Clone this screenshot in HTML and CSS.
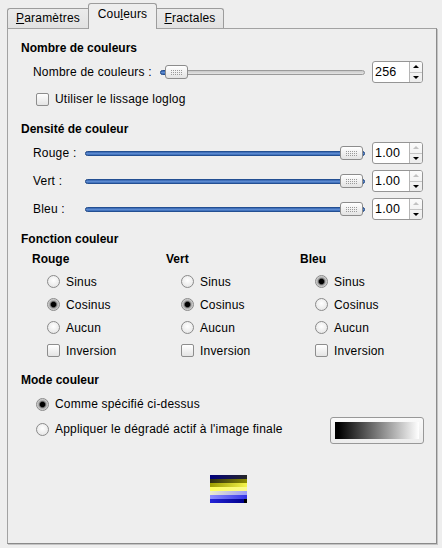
FILE: index.html
```html
<!DOCTYPE html>
<html lang="fr">
<head>
<meta charset="utf-8">
<title>Couleurs</title>
<link rel="stylesheet" href="styles.css">
</head>
<body>
<div class="tabs">
  <div class="tab first"><u>P</u>aramètres</div>
  <div class="tab active">Cou<u>l</u>eurs</div>
  <div class="tab last"><u>F</u>ractales</div>
</div>
<div class="panel">
  <div class="heading">Nombre de couleurs</div>
  <div class="srow">
    <div class="slabel lw-wide">Nombre de couleurs :</div>
    <div class="slider sw-wide">
      <div class="track"><div class="fill" style="width:8px"></div></div>
      <div class="handle" style="left:5px"><span class="dots"></span></div>
    </div>
    <div class="spin"><span class="spin-val">256</span><span class="spin-btns"><span class="sb"><i class="arr-up"></i></span><span class="sb down"><i class="arr-down"></i></span></span></div>
  </div>
  <div class="checkrow">
    <span class="check"></span><span>Utiliser le lissage loglog</span>
  </div>

  <div class="heading h2">Densité de couleur</div>
  <div class="srow">
    <div class="slabel lw-narrow">Rouge :</div>
    <div class="slider sw-narrow">
      <div class="track"><div class="fill" style="width:280px"></div></div>
      <div class="handle" style="left:255px"><span class="dots"></span></div>
    </div>
    <div class="spin"><span class="spin-val">1.00</span><span class="spin-btns"><span class="sb"><i class="arr-up off"></i></span><span class="sb down"><i class="arr-down"></i></span></span></div>
  </div>
  <div class="srow">
    <div class="slabel lw-narrow">Vert :</div>
    <div class="slider sw-narrow">
      <div class="track"><div class="fill" style="width:280px"></div></div>
      <div class="handle" style="left:255px"><span class="dots"></span></div>
    </div>
    <div class="spin"><span class="spin-val">1.00</span><span class="spin-btns"><span class="sb"><i class="arr-up off"></i></span><span class="sb down"><i class="arr-down"></i></span></span></div>
  </div>
  <div class="srow">
    <div class="slabel lw-narrow">Bleu :</div>
    <div class="slider sw-narrow">
      <div class="track"><div class="fill" style="width:280px"></div></div>
      <div class="handle" style="left:255px"><span class="dots"></span></div>
    </div>
    <div class="spin"><span class="spin-val">1.00</span><span class="spin-btns"><span class="sb"><i class="arr-up off"></i></span><span class="sb down"><i class="arr-down"></i></span></span></div>
  </div>

  <div class="heading h3">Fonction couleur</div>
  <div class="fgrid">
    <div class="fcol">
      <div class="colhead">Rouge</div>
      <div class="opts">
        <div class="opt"><span class="radio"></span><span>Sinus</span></div>
        <div class="opt"><span class="radio on"></span><span>Cosinus</span></div>
        <div class="opt"><span class="radio"></span><span>Aucun</span></div>
        <div class="opt"><span class="check"></span><span>Inversion</span></div>
      </div>
    </div>
    <div class="fcol">
      <div class="colhead">Vert</div>
      <div class="opts">
        <div class="opt"><span class="radio"></span><span>Sinus</span></div>
        <div class="opt"><span class="radio on"></span><span>Cosinus</span></div>
        <div class="opt"><span class="radio"></span><span>Aucun</span></div>
        <div class="opt"><span class="check"></span><span>Inversion</span></div>
      </div>
    </div>
    <div class="fcol">
      <div class="colhead">Bleu</div>
      <div class="opts">
        <div class="opt"><span class="radio on"></span><span>Sinus</span></div>
        <div class="opt"><span class="radio"></span><span>Cosinus</span></div>
        <div class="opt"><span class="radio"></span><span>Aucun</span></div>
        <div class="opt"><span class="check"></span><span>Inversion</span></div>
      </div>
    </div>
  </div>

  <div class="heading h4">Mode couleur</div>
  <div class="moderow m1">
    <span class="radio on"></span><span>Comme spécifié ci-dessus</span>
  </div>
  <div class="moderow m2">
    <span class="mode-left"><span class="radio"></span><span class="mlabel">Appliquer le dégradé actif à l'image finale</span></span>
    <span class="gradbtn"><span class="grad"></span></span>
  </div>

  <div class="preview">
    <div class="st s1"></div>
    <div class="st s2"></div>
    <div class="st s3"></div>
    <div class="st s4"></div>
    <div class="st s5"></div>
    <div class="st s6"></div>
    <div class="st s7"></div>
  </div>
</div>
</body>
</html>
```

FILE: styles.css
```css
html, body {
  margin: 0;
  padding: 0;
}
body {
  width: 442px;
  height: 548px;
  overflow: hidden;
  background: #eeeeee;
  font-family: "Liberation Sans", Arial, sans-serif;
  font-size: 12px;
  letter-spacing: 0.2px;
  color: #000;
}

/* Tabs */
.tabs {
  display: flex;
  align-items: flex-end;
  height: 28px;
  padding-left: 7px;
}
.tab {
  box-sizing: border-box;
  height: 20px;
  line-height: 18px;
  text-align: center;
  border: 1px solid #9c9c9c;
  border-bottom: none;
  border-radius: 3px 3px 0 0;
  background: linear-gradient(#ebebeb, #e2e2e2);
}
.tab u {
  text-decoration-thickness: 1px;
  text-underline-offset: 1px;
}
.tab.first {
  width: 81px;
  border-right: none;
  border-radius: 3px 0 0 0;
}
.tab.active {
  width: 69px;
  height: 26px;
  margin-bottom: -1px;
  padding-top: 1px;
  background: #eeeeee;
  position: relative;
  z-index: 2;
}
.tab.last {
  width: 67px;
  border-left: none;
  border-radius: 0 3px 0 0;
}

/* Panel */
.panel {
  box-sizing: border-box;
  margin-left: 7px;
  width: 430px;
  height: 516px;
  border: 1px solid #a2a2a2;
  border-right-color: #8a8a8a;
  border-bottom-color: #8a8a8a;
  box-shadow: 1px 1px 0 #c4c4c4;
  padding: 11px 12px 0 13px;
}
.heading {
  font-weight: bold;
  letter-spacing: 0;
  height: 16px;
  line-height: 16px;
}
.h2 { margin-top: 14px; }
.h3 { margin-top: 10px; }
.h4 { margin-top: 10px; }

/* Slider rows */
.srow {
  display: flex;
  align-items: center;
  height: 24px;
  margin-top: 4px;
  padding-left: 12px;
}
.slabel {
  line-height: 16px;
  white-space: nowrap;
}
.lw-wide { width: 127px; }
.lw-narrow { width: 52px; }
.slider {
  position: relative;
  height: 24px;
  display: flex;
  align-items: center;
}
.sw-wide { width: 205px; }
.sw-narrow { width: 280px; }
.track {
  position: relative;
  flex: 1;
  box-sizing: border-box;
  height: 5px;
  border: 1px solid #9a9a9a;
  border-radius: 3px;
  background: linear-gradient(#c8c8c8, #e4e4e4);
}
.fill {
  position: absolute;
  left: -1px;
  top: -1px;
  bottom: -1px;
  box-sizing: border-box;
  border: 1px solid #234f92;
  border-radius: 3px;
  background: linear-gradient(#3464b0, #5c8ad0 50%, #3869b5);
}
.handle {
  position: absolute;
  top: 5px;
  box-sizing: border-box;
  width: 23px;
  height: 14px;
  border: 1px solid #8c8c8c;
  border-radius: 3px;
  background: linear-gradient(#ffffff, #e3e3e3);
  display: flex;
  align-items: center;
  justify-content: center;
}
.dots {
  display: block;
  width: 11px;
  height: 5px;
  background-image: radial-gradient(circle at 0.5px 0.5px, #9a9a9a 0.6px, transparent 0.75px);
  background-size: 2px 2px;
}

/* Spin box */
.spin {
  box-sizing: border-box;
  width: 51px;
  height: 22px;
  margin-left: 7px;
  border: 1px solid #959595;
  border-radius: 3px;
  background: #fff;
  display: flex;
  overflow: hidden;
}
.spin-val {
  flex: 1;
  padding-left: 2px;
  line-height: 20px;
  font-size: 12.5px;
}
.spin-btns {
  width: 12px;
  border-left: 1px solid #b5b5b5;
  display: flex;
  flex-direction: column;
  background: linear-gradient(#fbfbfb, #ececec);
}
.sb {
  flex: 1;
  display: flex;
  align-items: center;
  justify-content: center;
}
.sb.down {
  border-top: 1px solid #c4c4c4;
}
.arr-up {
  width: 0;
  height: 0;
  border-left: 3px solid transparent;
  border-right: 3px solid transparent;
  border-bottom: 3px solid #000;
}
.arr-up.off {
  border-bottom-color: #c2c2c2;
}
.arr-down {
  width: 0;
  height: 0;
  border-left: 3px solid transparent;
  border-right: 3px solid transparent;
  border-top: 3px solid #000;
}

/* Check & radio */
.checkrow {
  display: flex;
  align-items: center;
  gap: 6px;
  height: 16px;
  margin-top: 7px;
  padding-left: 15px;
}
.check {
  flex: none;
  box-sizing: border-box;
  width: 13px;
  height: 13px;
  border: 1px solid #8d8d8d;
  border-radius: 2px;
  background: linear-gradient(#ffffff, #e4e4e4);
}
.radio {
  flex: none;
  box-sizing: border-box;
  width: 13px;
  height: 13px;
  border: 1px solid #8a8a8a;
  border-radius: 50%;
  background: radial-gradient(circle at 50% 40%, #ffffff, #e0e0e0);
}
.radio.on {
  background: radial-gradient(circle, #000 0 2.2px, #4a4a4a 2.8px, #a6a6a6 3.8px, #d6d6d6 5.5px);
}

/* Function grid */
.fgrid {
  display: grid;
  grid-template-columns: 134px 134px 1fr;
  margin-top: 4px;
  padding-left: 11px;
}
.colhead {
  font-weight: bold;
  letter-spacing: 0;
  height: 16px;
  line-height: 16px;
}
.opts {
  margin-top: 3px;
}
.opt {
  display: flex;
  align-items: center;
  gap: 6px;
  height: 23px;
  padding-left: 15px;
}

/* Mode couleur */
.moderow {
  display: flex;
  align-items: center;
  gap: 6px;
  padding-left: 15px;
}
.m1 {
  height: 24px;
  margin-top: 4px;
}
.m2 {
  height: 28px;
  justify-content: space-between;
}
.mode-left {
  display: flex;
  align-items: center;
  gap: 6px;
  padding-bottom: 2px;
}
.mlabel {
  line-height: 16px;
}
.gradbtn {
  box-sizing: border-box;
  width: 94px;
  height: 27px;
  margin-top: 1px;
  padding: 4px;
  border: 1px solid #989898;
  border-radius: 3px;
  background: linear-gradient(#fafafa, #ececec);
}
.grad {
  display: block;
  width: 84px;
  height: 17px;
  background: linear-gradient(to right, #000 0%, #000 4%, #fff 100%);
}

/* Preview */
.preview {
  width: 37px;
  height: 28px;
  margin-top: 31px;
  margin-left: 189px;
}
.st { height: 4px; }
.s1 { background: linear-gradient(to right, #00007e, #262626); }
.s2 { background: linear-gradient(to right, #2c2c14, #8e8e00); }
.s3 { background: linear-gradient(to right, #9c9c00, #f4f44c); }
.s4 { background: linear-gradient(to right, #ffff5c, #fafa8c); }
.s5 { background: linear-gradient(to right, #ececcc, #9c9cfa); }
.s6 { background: linear-gradient(to right, #8c8cff, #3434e4); }
.s7 { background: linear-gradient(to right, #2424d8, #00008c calc(100% - 3px), #000 calc(100% - 3px)); }
```
